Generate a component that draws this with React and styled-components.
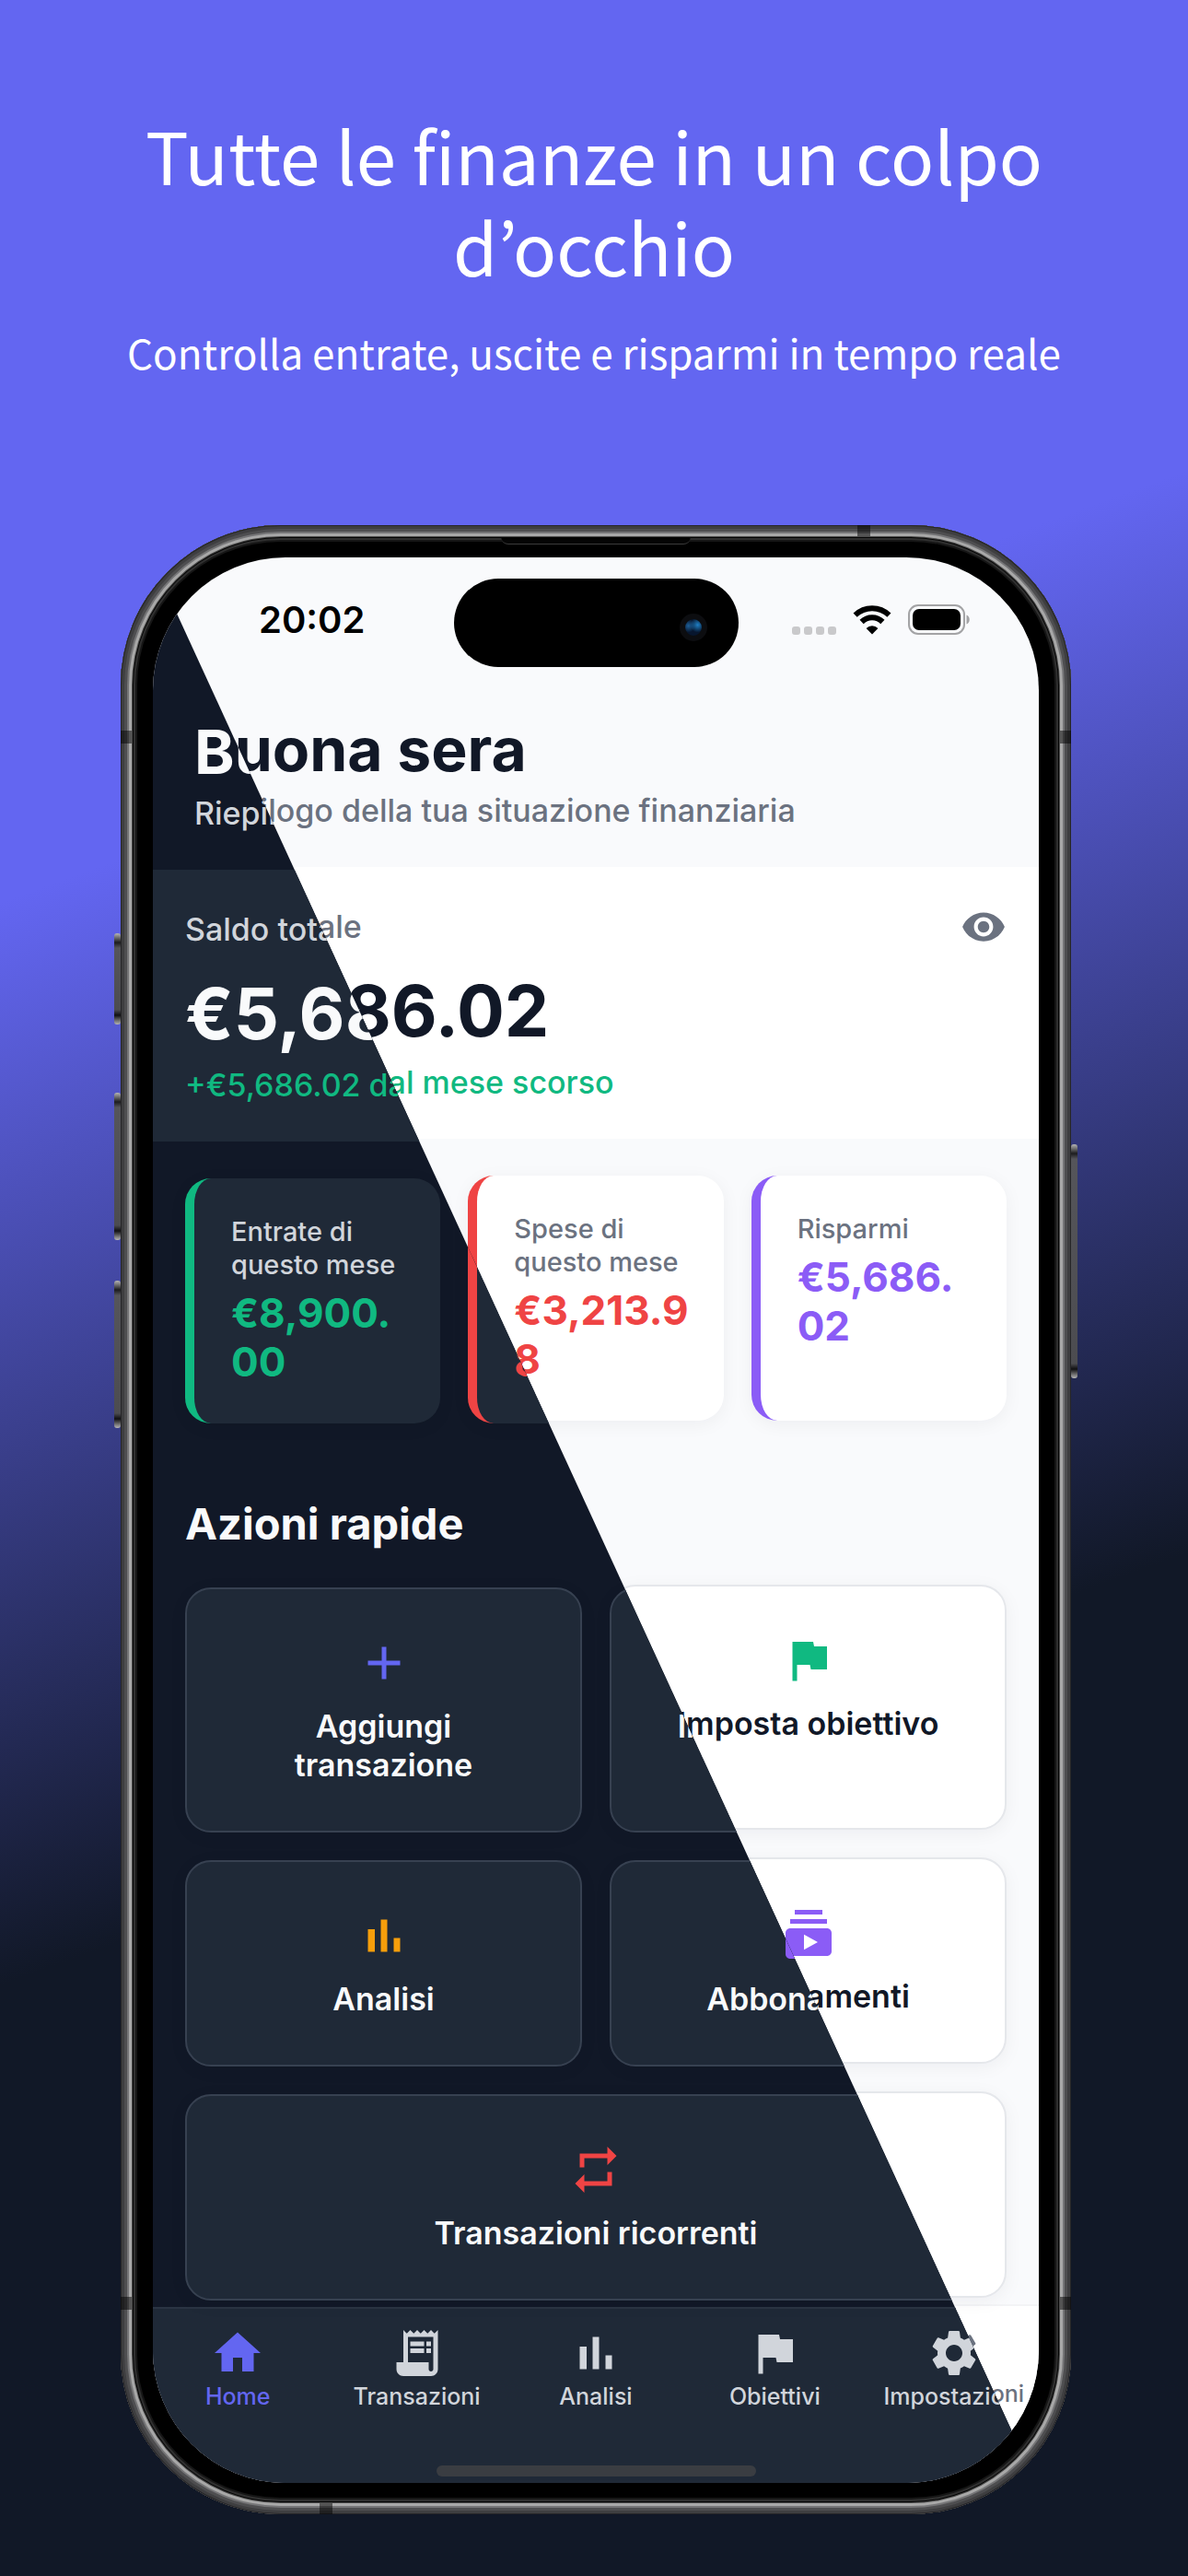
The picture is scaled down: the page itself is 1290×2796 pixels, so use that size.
import React from "react";
import styled, { createGlobalStyle, ThemeProvider } from "styled-components";
import {
  MdAdd,
  MdFlag,
  MdHome,
  MdReceiptLong,
  MdRepeat,
  MdSettings,
  MdSubscriptions,
  MdVisibility,
} from "react-icons/md";

const palette = {
  indigo: "#6366f1",
  green: "#10b981",
  red: "#ef4444",
  violet: "#8b5cf6",
  amber: "#f59e0b",
};

const lightTheme = {
  background: "#f9fafc",
  surface: "#ffffff",
  border: "#e5e7eb",
  tabLine: "#f3f4f6",
  text: "#111827",
  muted: "#6b7280",
  shadow: "rgba(17, 24, 39, 0.05)",
};

const darkTheme = {
  background: "#111827",
  surface: "#1f2937",
  border: "#374151",
  tabLine: "#2a3443",
  text: "#f9fafb",
  muted: "#d1d5db",
  shadow: "rgba(0, 0, 0, 0.05)",
};

const GlobalStyle = createGlobalStyle`
  *, *::before, *::after { box-sizing: border-box; }
  body { margin: 0; background: #111827; }
  h1, h2, p, ul { margin: 0; padding: 0; }
  button { font: inherit; color: inherit; cursor: pointer; }
`;

const Page = styled.div`
  min-height: 100vh;
  padding: 118px 0 66px;
  background: linear-gradient(160deg, #6366f1 30%, #111827 66%);
`;

const Pitch = styled.header`
  padding: 0 100px;
  text-align: center;
  color: #ffffff;
  font-family: "Noto Sans CJK JP", "Noto Sans", sans-serif;
`;

const PitchTitle = styled.h1`
  font-size: 78px;
  font-weight: 400;
  line-height: 99px;
`;

const PitchText = styled.p`
  margin-top: 36px;
  font-size: 44px;
  line-height: 60px;
`;

const Stage = styled.main`
  margin-top: 158px;
  padding: 0 127px 0 131px;
  font-family: Inter, "Liberation Sans", sans-serif;
`;

const Phone = styled.div`
  position: relative;
  padding: 35px 35px 34px;
  border-radius: 174px;
  background: #000000;
  box-shadow:
    inset 0 0 0 1px #262628,
    inset 0 0 0 4px #3e3e40,
    inset 0 0 0 7px #4e4e50,
    inset 0 0 0 9px #757577,
    inset 0 0 0 12px #a8a8a8,
    inset 0 0 0 13px #4a4a4a,
    inset 0 0 0 14px #050505,
    inset 0 0 0 16px #303030,
    inset 0 0 0 18px #161616;
`;

const SideKey = styled.span`
  position: absolute;
  top: ${(p) => p.$top}px;
  ${(p) => p.$side}: -7px;
  width: 7px;
  height: ${(p) => p.$height}px;
  border-radius: 3px;
  background: linear-gradient(#b5b5b5, #1c1c1e 10px, #55555a 16px, #4c4c50 calc(100% - 16px), #101012 calc(100% - 10px), #b5b5b5);
`;

const AntennaBand = styled.span`
  position: absolute;
  ${(p) => p.$edge}: 0;
  ${(p) => p.$from}: ${(p) => p.$offset}px;
  width: ${(p) => (p.$edge === "top" || p.$edge === "bottom" ? 14 : 12)}px;
  height: ${(p) => (p.$edge === "top" || p.$edge === "bottom" ? 12 : 14)}px;
  background: rgba(0, 0, 0, 0.5);
`;

const Earpiece = styled.span`
  position: absolute;
  top: 13px;
  left: 50%;
  width: 206px;
  height: 8px;
  margin-left: -103px;
  border-bottom: 1px solid #3a3a3a;
  border-radius: 0 0 8px 8px;
  background: #050505;
`;

const Screen = styled.div`
  position: relative;
  display: grid;
  overflow: hidden;
  border-radius: 144px;
`;

const Layer = styled.div`
  grid-area: 1 / 1;
  min-width: 0;
  color: ${(p) => p.theme.text};
  background: ${(p) => p.theme.background};
`;

const DiagonalLayer = styled(Layer)`
  z-index: 1;
  padding-top: 3px;
  margin-bottom: -3px;
  clip-path: polygon(-2px 0, calc(100% - 2px) 100%, 0 100%);
`;

const AppView = styled.div`
  margin: 0 -5px;
`;

const StatusBar = styled.div`
  display: flex;
  align-items: center;
  justify-content: space-between;
  height: 136px;
  padding: 0 80px 0 120px;
  color: #000000;
`;

const Clock = styled.time`
  font-size: 40px;
  font-weight: 600;
  line-height: 48px;
`;

const StatusIcons = styled.div`
  display: flex;
  align-items: center;
  gap: 18px;
`;

const Greeting = styled.div`
  padding: 34px 50px 40px;
`;

const GreetingTitle = styled.h2`
  font-size: 66px;
  font-weight: 700;
  line-height: 76px;
`;

const GreetingText = styled.p`
  margin-top: 8px;
  color: ${(p) => p.theme.muted};
  font-size: 34px;
  font-weight: 500;
  line-height: 42px;
`;

const Balance = styled.section`
  padding: 40px;
  background: ${(p) => p.theme.surface};
`;

const BalanceHead = styled.div`
  display: flex;
  align-items: center;
  justify-content: space-between;
  color: ${(p) => p.theme.muted};
  font-size: 34px;
  font-weight: 500;
  line-height: 42px;
`;

const IconButton = styled.button`
  display: flex;
  padding: 0;
  border: 0;
  background: none;
  font-size: 50px;
`;

const Amount = styled.p`
  margin-top: 21px;
  font-size: 77px;
  font-weight: 700;
  line-height: 90px;
`;

const Delta = styled.p`
  margin-top: 12px;
  color: ${palette.green};
  font-size: 34px;
  font-weight: 500;
  line-height: 42px;
`;

const Body = styled.div`
  padding: 40px 40px 7px;
`;

const Stats = styled.div`
  display: grid;
  grid-template-columns: repeat(3, minmax(0, 1fr));
  gap: 30px;
`;

const Stat = styled.article`
  padding: 40px 30px 40px 40px;
  border-left: 10px solid ${(p) => p.$tone};
  border-radius: 28px;
  background: ${(p) => p.theme.surface};
  box-shadow: 0 4px 20px ${(p) => p.theme.shadow};
`;

const StatLabel = styled.p`
  color: ${(p) => p.theme.muted};
  font-size: 29px;
  font-weight: 500;
  line-height: 36px;
`;

const StatValue = styled.p`
  margin-top: 8px;
  color: ${(p) => p.$tone};
  font-size: 44px;
  font-weight: 700;
  line-height: 53px;
  white-space: nowrap;
`;

const SectionTitle = styled.h2`
  margin: 80px 0 40px;
  font-size: 47px;
  font-weight: 700;
  line-height: 58px;
`;

const Actions = styled.div`
  display: grid;
  grid-template-columns: repeat(2, minmax(0, 1fr));
  gap: 30px;
`;

const Action = styled.button`
  display: flex;
  flex-direction: column;
  align-items: center;
  gap: 18px;
  padding: 50px;
  border: 2px solid ${(p) => p.theme.border};
  border-radius: 28px;
  background: ${(p) => p.theme.surface};
  box-shadow: 0 4px 20px ${(p) => p.theme.shadow};
  grid-column: ${(p) => (p.$wide ? "1 / -1" : "auto")};

  svg {
    width: 60px;
    height: 60px;
    color: ${(p) => p.$tone};
  }
`;

const ActionLabel = styled.span`
  font-size: 34px;
  font-weight: 600;
  line-height: 42px;
`;

const TabBar = styled.nav`
  display: grid;
  grid-template-columns: repeat(5, minmax(0, 1fr));
  padding: 20px 0 80px;
  background: ${(p) => p.theme.surface};
  box-shadow: inset 0 2px ${(p) => p.theme.tabLine};
`;

const Tab = styled.a`
  display: flex;
  flex-direction: column;
  align-items: center;
  color: ${(p) => (p.$active ? palette.indigo : p.theme.muted)};
  font-size: 25px;
  font-weight: 500;
  line-height: 34px;
  text-decoration: none;

  svg {
    width: 60px;
    height: 60px;
  }
`;

const Island = styled.div`
  position: absolute;
  z-index: 2;
  top: 23px;
  left: 50%;
  display: flex;
  align-items: center;
  justify-content: flex-end;
  width: 309px;
  height: 96px;
  margin-left: -154px;
  padding: 10px 34px 0 0;
  border-radius: 48px;
  background: #000000;
`;

const Lens = styled.span`
  width: 30px;
  height: 30px;
  border: 6px solid #0c0d10;
  border-radius: 50%;
  background:
    radial-gradient(circle at 75% 35%, #1f7fc4 0, rgba(31, 127, 196, 0) 45%),
    radial-gradient(circle at 20% 40%, #1d5f98 0, rgba(29, 95, 152, 0) 40%),
    #07162e;
`;

const HomeIndicator = styled.div`
  position: absolute;
  z-index: 2;
  bottom: 7px;
  left: 50%;
  width: 347px;
  height: 12px;
  margin-left: -173px;
  border-radius: 6px;
  background: #3a3d42;
`;

function BarsIcon() {
  return (
    <svg viewBox="0 0 24 24" fill="currentColor" aria-hidden="true">
      <path d="M5 9.200h3V19H5zM10.600 5h2.800v14h-2.800zm5.600 8H19v6h-2.800z" />
    </svg>
  );
}

function SignalDots() {
  return (
    <svg width="48" height="32" viewBox="0 0 48 32" fill="#c9c9cb" aria-hidden="true">
      {[0, 13, 26, 39].map((x) => (
        <rect key={x} x={x} y="23" width="9" height="9" rx="3" />
      ))}
    </svg>
  );
}

function WifiIcon() {
  return (
    <svg width="42" height="32" viewBox="0 0 42 32" aria-hidden="true">
      <g fill="none" stroke="#000000" strokeWidth="6">
        <path d="M2.6 10.6a26.5 26.5 0 0 1 36.8 0" />
        <path d="M9.6 18a16.2 16.2 0 0 1 22.8 0" />
      </g>
      <path d="M21 31.5l6.4-6.5a9 9 0 0 0-12.800 0z" />
    </svg>
  );
}

function BatteryIcon() {
  return (
    <svg width="67" height="34" viewBox="0 0 67 34" aria-hidden="true">
      <rect x="1" y="1" width="60" height="31" rx="10" fill="none" stroke="#a3a3a5" strokeWidth="2" />
      <rect x="5" y="5" width="52" height="23" rx="7" fill="#000000" />
      <path d="M63.5 11.5a5.5 5.5 0 0 1 0 10z" fill="#a3a3a5" />
    </svg>
  );
}

const stats = [
  { label: ["Entrate di", "questo mese"], value: ["€8,900.", "00"], tone: palette.green },
  { label: ["Spese di", "questo mese"], value: ["€3,213.9", "8"], tone: palette.red },
  { label: ["Risparmi"], value: ["€5,686.", "02"], tone: palette.violet },
];

const actions = [
  { label: "Aggiungi transazione", icon: MdAdd, tone: palette.indigo },
  { label: "Imposta obiettivo", icon: MdFlag, tone: palette.green },
  { label: "Analisi", icon: BarsIcon, tone: palette.amber },
  { label: "Abbonamenti", icon: MdSubscriptions, tone: palette.violet },
  { label: "Transazioni ricorrenti", icon: MdRepeat, tone: palette.red, wide: true },
];

const tabs = [
  { label: "Home", icon: MdHome, active: true },
  { label: "Transazioni", icon: MdReceiptLong },
  { label: "Analisi", icon: BarsIcon },
  { label: "Obiettivi", icon: MdFlag },
  { label: "Impostazioni", icon: MdSettings },
];

function Lines({ parts }) {
  return parts.map((part, i) => (
    <React.Fragment key={part}>
      {i > 0 && <br />}
      {part}
    </React.Fragment>
  ));
}

function Dashboard() {
  return (
    <AppView>
      <StatusBar>
        <Clock>20:02</Clock>
        <StatusIcons>
          <SignalDots />
          <WifiIcon />
          <BatteryIcon />
        </StatusIcons>
      </StatusBar>
      <Greeting>
        <GreetingTitle>Buona sera</GreetingTitle>
        <GreetingText>Riepilogo della tua situazione finanziaria</GreetingText>
      </Greeting>
      <Balance>
        <BalanceHead>
          <span>Saldo totale</span>
          <IconButton type="button" aria-label="Mostra o nascondi il saldo">
            <MdVisibility />
          </IconButton>
        </BalanceHead>
        <Amount>€5,686.02</Amount>
        <Delta>+€5,686.02 dal mese scorso</Delta>
      </Balance>
      <Body>
        <Stats>
          {stats.map((s) => (
            <Stat key={s.label[0]} $tone={s.tone}>
              <StatLabel>
                <Lines parts={s.label} />
              </StatLabel>
              <StatValue $tone={s.tone}>
                <Lines parts={s.value} />
              </StatValue>
            </Stat>
          ))}
        </Stats>
        <SectionTitle>Azioni rapide</SectionTitle>
        <Actions>
          {actions.map(({ label, icon: Icon, tone, wide }) => (
            <Action key={label} type="button" $tone={tone} $wide={wide}>
              <Icon />
              <ActionLabel>{label}</ActionLabel>
            </Action>
          ))}
        </Actions>
      </Body>
      <TabBar>
        {tabs.map(({ label, icon: Icon, active }) => (
          <Tab key={label} href="#" $active={active}>
            <Icon />
            {label}
          </Tab>
        ))}
      </TabBar>
    </AppView>
  );
}

export default function App() {
  return (
    <Page lang="it">
      <GlobalStyle />
      <Pitch>
        <PitchTitle>Tutte le finanze in un colpo d’occhio</PitchTitle>
        <PitchText>Controlla entrate, uscite e risparmi in tempo reale</PitchText>
      </Pitch>
      <Stage>
        <Phone>
          <SideKey $side="left" $top={443} $height={99} />
          <SideKey $side="left" $top={616} $height={160} />
          <SideKey $side="left" $top={820} $height={160} />
          <SideKey $side="right" $top={672} $height={254} />
          <AntennaBand $edge="left" $from="top" $offset={223} />
          <AntennaBand $edge="right" $from="top" $offset={223} />
          <AntennaBand $edge="left" $from="bottom" $offset={222} />
          <AntennaBand $edge="right" $from="bottom" $offset={222} />
          <AntennaBand $edge="top" $from="right" $offset={218} />
          <AntennaBand $edge="bottom" $from="left" $offset={216} />
          <Earpiece />
          <Screen>
            <ThemeProvider theme={lightTheme}>
              <Layer>
                <Dashboard />
              </Layer>
            </ThemeProvider>
            <ThemeProvider theme={darkTheme}>
              <DiagonalLayer aria-hidden="true" inert>
                <Dashboard />
              </DiagonalLayer>
            </ThemeProvider>
            <Island>
              <Lens />
            </Island>
            <HomeIndicator />
          </Screen>
        </Phone>
      </Stage>
    </Page>
  );
}
